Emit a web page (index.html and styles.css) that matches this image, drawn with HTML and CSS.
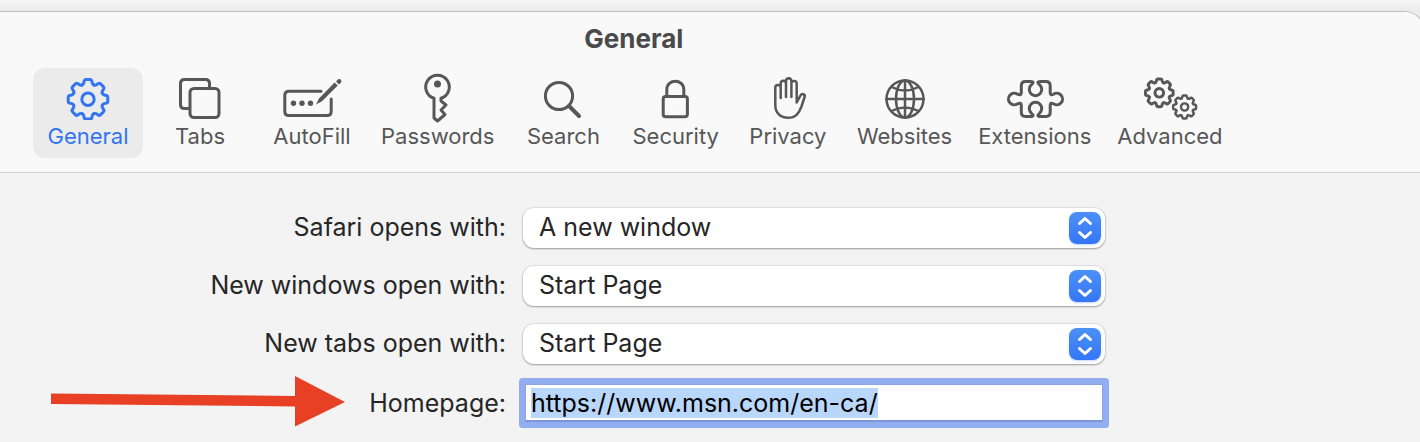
FILE: index.html
```html
<!DOCTYPE html>
<html lang="en">
<head>
<meta charset="utf-8">
<title>General</title>
<link rel="stylesheet" href="styles.css">
</head>
<body>
<svg class="defs" aria-hidden="true">
  <defs>
    <path id="tooth" d="M-5.9-14.3Q-4.6-15-4.3-16.2L-3.8-18.4Q-3.5-19.8-2.2-19.8H2.2Q3.5-19.8 3.8-18.4L4.3-16.2Q4.6-15 5.9-14.3"/>
    <g id="gear">
      <use href="#tooth"/><use href="#tooth" transform="rotate(45)"/><use href="#tooth" transform="rotate(90)"/><use href="#tooth" transform="rotate(135)"/><use href="#tooth" transform="rotate(180)"/><use href="#tooth" transform="rotate(225)"/><use href="#tooth" transform="rotate(270)"/><use href="#tooth" transform="rotate(315)"/>
      <circle r="6.2"/>
    </g>
  </defs>
</svg>
<main class="window">
  <header class="header">
    <div class="header-inner">
      <h1 class="title">General</h1>
      <nav class="toolbar" aria-label="Settings">
        <button class="tab tab-active" type="button">
          <svg class="icon" viewBox="58 72 60 48"><use href="#gear" transform="translate(88 99.3)"/></svg>
          <span>General</span>
        </button>
        <button class="tab" type="button">
          <svg class="icon" viewBox="170 72 60 48"><path d="M189 108.500H184.500Q180.500 108.500 180.500 104.500V83.500Q180.500 79.500 184.500 79.500H205.500Q209.500 79.500 209.500 83.500V88"/><rect x="190" y="88.500" width="29" height="29" rx="4"/></svg>
          <span>Tabs</span>
        </button>
        <button class="tab" type="button">
          <svg class="icon" viewBox="282 72 60 48"><path d="M321 91.200H289Q284.800 91.200 284.800 95.500V111.500Q284.800 115.500 289 115.500H327Q331.200 115.500 331.200 111.500V99"/><g class="solid"><circle cx="293.500" cy="103.300" r="2.700"/><circle cx="302" cy="103.300" r="2.700"/><circle cx="310.500" cy="103.300" r="2.700"/><path d="M316 104.500L319 98.400 334.600 82.400 337.800 85.600 322 101.200ZM336 81.400L338.200 79.300Q339.600 78.500 341 79.800 342 81.200 341 82.500L339 84.400Z"/></g></svg>
          <span>AutoFill</span>
        </button>
        <button class="tab" type="button">
          <svg class="icon" viewBox="407.500 72 60 48" overflow="visible"><path d="M433.500 98.300A11.800 11.800 0 1 1 440.500 98.300V101L445.500 105 440.500 110 444.500 114.500 440.500 118 437 121 433.500 118Z"/><circle class="solid" cx="437" cy="84" r="3.500"/></svg>
          <span>Passwords</span>
        </button>
        <button class="tab" type="button">
          <svg class="icon" viewBox="533 72 60 48"><circle cx="559" cy="96" r="13.600"/><path class="thick" d="M569.500 106.500L579 116"/></svg>
          <span>Search</span>
        </button>
        <button class="tab" type="button">
          <svg class="icon" viewBox="646 72 60 48"><rect x="663.200" y="96.500" width="24.200" height="20.200" rx="2.500"/><path d="M666.800 96V89.500C666.800 78.500 683.800 78.500 683.800 89.500V96"/></svg>
          <span>Security</span>
        </button>
        <button class="tab" type="button">
          <svg class="icon icon-fine" viewBox="758 72 60 48"><path d="M780.700 98V87.500C780.700 84.200 775.300 84.200 775.300 87.500V105C775.300 113 780.500 117.800 788 117.800 796 117.800 799 113 801.500 106.500L804.600 97C805.500 94.200 801.800 93 800.500 95.500L796.700 102.500V83.500C796.700 80 791.400 80 791.400 83.500V97V81.500C791.400 77 786 77 786 81.500V97V83.500C786 79.800 780.700 79.800 780.700 83.500V98"/></svg>
          <span>Privacy</span>
        </button>
        <button class="tab" type="button">
          <svg class="icon icon-fine" viewBox="875 72 60 48"><circle cx="905" cy="99" r="18.500"/><ellipse cx="905" cy="99" rx="9" ry="18.500"/><path d="M905 80.300V117.700M886.300 99H923.700M891.500 87Q905 94 918.500 87M891.500 111Q905 104 918.500 111"/></svg>
          <span>Websites</span>
        </button>
        <button class="tab" type="button">
          <svg class="icon" viewBox="1005 72 60 48"><path d="M1030.500 81.500H1025.500Q1021.300 81.500 1021.300 85.700V92C1021.300 95.500 1019.500 95 1017.500 94.200A5.800 5.800 0 1 0 1017.500 103.800C1019.500 103 1021.300 102.500 1021.300 106V112.300Q1021.300 116.500 1025.500 116.500H1030.500C1034.500 116.500 1033 114.500 1031.500 113.300A6.200 6.200 0 1 1 1039.500 113.300C1038 114.500 1036.500 116.500 1040.500 116.500H1046Q1050.200 116.500 1050.200 112.300V106C1050.200 102.500 1052 103 1053.500 103.800A5.800 5.800 0 1 0 1053.500 94.200C1052 95 1050.200 95.500 1050.200 92V85.700Q1050.200 81.500 1046 81.500H1040.500C1036.500 81.500 1038 83.500 1039.500 84.700A6.200 6.200 0 1 1 1031.500 84.700C1033 83.500 1034.500 81.500 1030.500 81.500Z"/></svg>
          <span>Extensions</span>
        </button>
        <button class="tab" type="button">
          <svg class="icon icon-gears" viewBox="1140 72 60 48"><use href="#gear" transform="translate(1159.300 92.800) scale(.7)"/><use href="#gear" transform="translate(1184.600 107) scale(.58)"/></svg>
          <span>Advanced</span>
        </button>
      </nav>
    </div>
  </header>

  <form class="form">
    <label class="label" for="opens">Safari opens with:</label>
    <div class="popup">
      <select id="opens"><option>A new window</option><option>Start Page</option></select>
      <svg class="stepper" viewBox="0 0 32 32" aria-hidden="true"><path d="M10.500 11.500L16 6.500 21.500 11.500M10.500 20.500L16 25.500 21.500 20.500"/></svg>
    </div>
    <label class="label" for="windows">New windows open with:</label>
    <div class="popup">
      <select id="windows"><option>Start Page</option></select>
      <svg class="stepper" viewBox="0 0 32 32" aria-hidden="true"><path d="M10.500 11.500L16 6.500 21.500 11.500M10.500 20.500L16 25.500 21.500 20.500"/></svg>
    </div>
    <label class="label" for="tabs">New tabs open with:</label>
    <div class="popup">
      <select id="tabs"><option>Start Page</option></select>
      <svg class="stepper" viewBox="0 0 32 32" aria-hidden="true"><path d="M10.500 11.500L16 6.500 21.500 11.500M10.500 20.500L16 25.500 21.500 20.500"/></svg>
    </div>
    <div class="homepage-label">
      <svg class="arrow" viewBox="0 0 294 52" aria-hidden="true"><path d="M0 16.500L244 19V-1L294 25 244 49.500V29.500L0 27Z"/></svg>
      <label class="label" for="homepage">Homepage:</label>
    </div>
    <input class="url" id="homepage" type="text" value="https://www.msn.com/en-ca/" spellcheck="false">
  </form>
</main>
<script src="script.js"></script>
</body>
</html>
```
FILE: styles.css
```css
* { box-sizing: border-box; }

body {
  margin: 0;
  padding-top: 11px;
  min-height: 100vh;
  overflow: hidden;
  background: linear-gradient(#f5f5f5, #ebebeb 11px);
  font-family: Inter, "Liberation Sans", sans-serif;
  color: #262626;
}

.defs { position: absolute; width: 0; height: 0; }

.window {
  min-height: calc(100vh - 11px);
  margin-right: -6px;
  padding-right: 5px;
  border-top: 1px solid #bdbdbd;
  border-right: 1px solid #bdbdbd;
  border-top-right-radius: 22px;
  background: #f3f3f3;
  overflow: hidden;
}

.header {
  margin-right: -5px;
  padding: 11px 0 14px 33px;
  border-bottom: 1px solid #d2d2d2;
  background: #f9f9f9;
}

.header-inner { width: max-content; }

.title {
  margin: 0 0 13px;
  font-size: 26px;
  line-height: 32px;
  font-weight: 700;
  text-align: center;
  color: #4a4a4a;
}

.toolbar { display: flex; gap: 2px; }

.tab {
  display: flex;
  flex-direction: column;
  align-items: center;
  min-width: 110px;
  padding: 4px 12px 6px;
  border: 0;
  border-radius: 12px;
  background: none;
  font: 22px/32px Inter, "Liberation Sans", sans-serif;
  color: #575757;
}

.tab-active { background: #ebebeb; color: #3374f0; }

.icon {
  width: 60px;
  height: 48px;
  fill: none;
  stroke: currentColor;
  stroke-width: 3;
  stroke-linecap: round;
  stroke-linejoin: round;
}

.icon-fine { stroke-width: 2.5; }
.icon-gears { stroke-width: 4.2; }
.solid { fill: currentColor; stroke: none; }
.thick { stroke-width: 4; }

.form {
  display: grid;
  grid-template-columns: minmax(0, 506fr) minmax(0, 582fr) minmax(0, 298fr);
  gap: 18px 17px;
  padding: 35px 0 14px;
  font-size: 25px;
}

.label {
  grid-column: 1;
  line-height: 38px;
  text-align: right;
  white-space: nowrap;
}

.popup { position: relative; grid-column: 2; }

.popup select {
  display: block;
  width: 100%;
  height: 40px;
  padding: 0 48px 2px 16px;
  border: 0;
  border-radius: 11px;
  appearance: none;
  background: #fff;
  box-shadow: 0 0 1px 1px rgba(0, 0, 0, .08), 0 1px 2px rgba(0, 0, 0, .3);
  font: inherit;
  color: inherit;
}

.stepper {
  position: absolute;
  top: 4px;
  right: 4px;
  width: 32px;
  height: 32px;
  border-radius: 8px;
  background: linear-gradient(#4c90f7, #3576f6);
  box-shadow: 0 1px 2px rgba(53, 118, 246, .3);
  fill: none;
  stroke: #fff;
  stroke-width: 3;
  stroke-linecap: round;
  stroke-linejoin: round;
  pointer-events: none;
}

.homepage-label {
  display: flex;
  grid-column: 1;
  align-items: center;
  justify-content: flex-end;
  gap: 24px;
  height: 38px;
  margin-top: 2px;
}

.arrow { flex: none; width: 294px; height: 52px; overflow: visible; fill: #e84025; }

.url {
  grid-column: 2;
  min-width: 0;
  height: 38px;
  margin: 2px 2px 0;
  padding: 0 5px;
  border: 1px solid #8aa4e6;
  border-bottom: 2px solid #7c96d8;
  outline: 0;
  background: #fff;
  box-shadow: 0 0 0 6px #92aef0;
  border-radius: 1px;
  font: 25px/32px Inter, "Liberation Sans", sans-serif;
  color: #000;
}

.url::selection { background: #b9d6fb; color: #000; }
```
FILE: script.js
```js
const homepage = document.getElementById("homepage");
homepage.focus();
homepage.select();
```
